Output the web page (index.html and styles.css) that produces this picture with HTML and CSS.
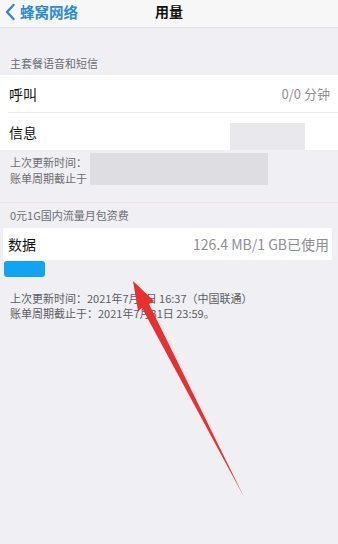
FILE: index.html
```html
<!DOCTYPE html>
<html lang="zh-CN">
<head>
    <meta charset="UTF-8">
    <meta name="viewport" content="width=device-width, initial-scale=1.0">
    <title>用量</title>
    <link rel="stylesheet" href="styles.css">
</head>
<body>

<header class="navbar">
    <a class="back" href="#">
        <svg width="12" height="18" viewBox="0 0 12 18"><path d="M9.5 2 L3 9 L9.5 16" fill="none" stroke="#2b8ad6" stroke-width="2.4" stroke-linecap="round" stroke-linejoin="round"/></svg>
        <span>蜂窝网络</span>
    </a>
    <h1>用量</h1>
</header>

<main class="page">
    <div class="section-title first">主套餐语音和短信</div>
    <div class="group">
        <div class="row">
            <span class="label">呼叫</span>
            <span class="value">0/0 分钟</span>
        </div>
        <div class="row">
            <span class="label">信息</span>
            <span class="mask mask-row"></span>
        </div>
    </div>
    <div class="note note-top">
        <p>上次更新时间：<br>账单周期截止于</p>
        <span class="mask mask-note"></span>
    </div>

    <div class="divider"></div>

    <div class="section-title">0元1G国内流量月包资费</div>
    <div class="group group-data">
        <div class="row">
            <span class="label">数据</span>
            <span class="value">126.4 MB/1 GB已使用</span>
        </div>
    </div>
    <div class="usage">
        <div class="usage-fill"></div>
    </div>
    <div class="note note-bottom">
        <p>上次更新时间：2021年7月3日 16:37（中国联通）<br>账单周期截止于：2021年7月31日 23:59。</p>
    </div>
</main>

<svg class="arrow" width="338" height="544" viewBox="0 0 338 544">
    <polygon points="133,281 154,301 149,304 244,497 142,308 138,311" fill="#e8302e"/>
</svg>

</body>
</html>
```

FILE: styles.css
```css
body {
    margin: 0;
    background: #efeff4;
    font-family: "Noto Sans CJK SC", "Noto Sans", sans-serif;
    color: #111;
    position: relative;
    height: 544px;
    overflow: hidden;
}
.navbar {
    height: 27px;
    background: #f7f7f8;
    border-bottom: 1px solid #e2e2e6;
    display: flex;
    align-items: center;
    justify-content: center;
    position: relative;
}
.navbar h1 {
    margin: 0;
    font-size: 14px;
    font-weight: bold;
    line-height: 1;
    margin-top: -6px;
}
.back {
    position: absolute;
    left: 4px;
    top: 1px;
    display: flex;
    align-items: center;
    gap: 4px;
    color: #2b8ad6;
    text-decoration: none;
    font-size: 14.5px;
    font-weight: bold;
}
.page {
    display: flex;
    flex-direction: column;
}
.section-title {
    font-size: 11px;
    color: #6d6d72;
    padding: 0 10px;
    height: 24px;
    line-height: 24px;
}
.section-title.first {
    margin-top: 23px;
}
.group {
    background: #fff;
    position: relative;
}
.row {
    height: 37px;
    display: flex;
    align-items: center;
    justify-content: space-between;
    padding: 0 8px 0 9px;
    position: relative;
}
.row + .row {
    border-top: 1px solid #ececef;
    margin-left: 8px;
    padding-left: 1px;
}
.label {
    font-size: 14px;
}
.value {
    font-size: 13px;
    color: #8e8e93;
}
.mask {
    position: absolute;
    background: #e9e9ed;
}
.mask-row {
    left: 222px;
    top: 10px;
    width: 75px;
    height: 27px;
}
.note {
    font-size: 11px;
    color: #6d6d72;
    padding: 0 10px;
    position: relative;
}
.note p {
    margin: 0;
}
.note-top {
    padding-top: 4px;
    line-height: 16px;
    height: 48px;
}
.mask-note {
    left: 90px;
    top: 3px;
    width: 178px;
    height: 32px;
    background: #dedee2;
}
.divider {
    height: 1px;
    background: #f3e4dc;
}
.section-title + .group-data {
    margin-top: 1px;
}
.group-data {
    margin: 0 6px 0 3px;
}
.group-data .row {
    height: 32px;
    padding: 0 3px 0 5px;
}
.group-data .value {
    font-size: 14px;
}
.usage {
    margin: 1px 0 0 4px;
}
.usage-fill {
    width: 41px;
    height: 16px;
    border-radius: 3px;
    background: #12a4f0;
}
.note-bottom {
    margin-top: 14px;
    line-height: 15px;
    color: #5d5d62;
}
.arrow {
    position: absolute;
    left: 0;
    top: 0;
    pointer-events: none;
}
```
